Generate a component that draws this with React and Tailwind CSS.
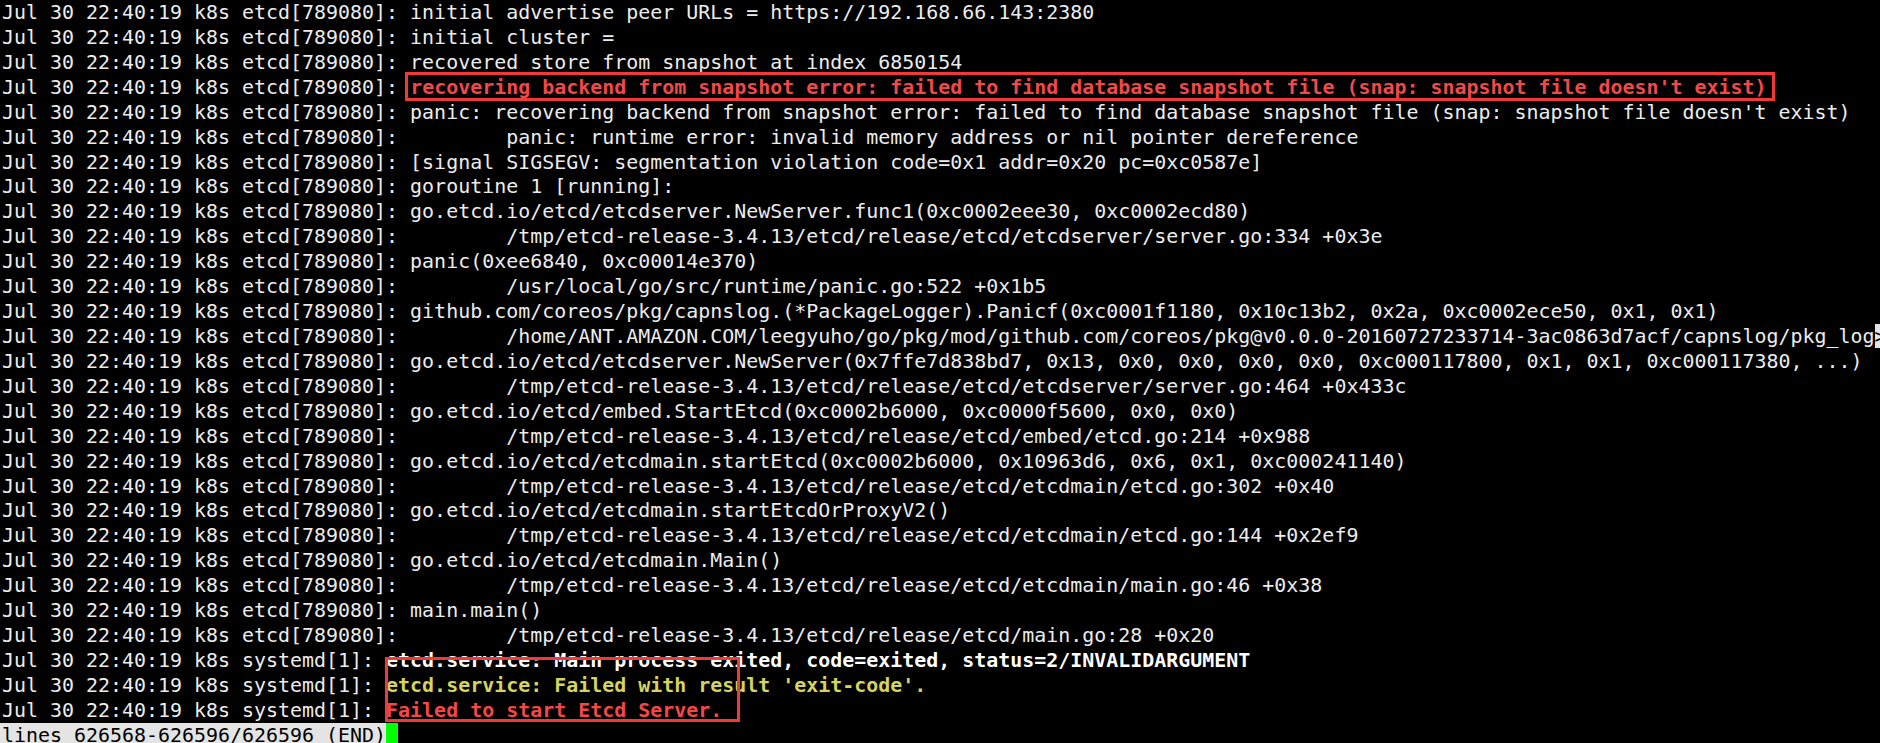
import React from 'react';

const P = 'Jul 30 22:40:19 k8s etcd[789080]: ';
const S = 'Jul 30 22:40:19 k8s systemd[1]: ';
const T = '        ';

const lines = [
  [P + 'initial advertise peer URLs = https://192.168.66.143:2380'],
  [P + 'initial cluster ='],
  [P + 'recovered store from snapshot at index 6850154'],
  [P, { t: "recovering backend from snapshot error: failed to find database snapshot file (snap: snapshot file doesn't exist)", c: 'font-bold text-[#f24848]' }],
  [P + "panic: recovering backend from snapshot error: failed to find database snapshot file (snap: snapshot file doesn't exist)"],
  [P + T + 'panic: runtime error: invalid memory address or nil pointer dereference'],
  [P + '[signal SIGSEGV: segmentation violation code=0x1 addr=0x20 pc=0xc0587e]'],
  [P + 'goroutine 1 [running]:'],
  [P + 'go.etcd.io/etcd/etcdserver.NewServer.func1(0xc0002eee30, 0xc0002ecd80)'],
  [P + T + '/tmp/etcd-release-3.4.13/etcd/release/etcd/etcdserver/server.go:334 +0x3e'],
  [P + 'panic(0xee6840, 0xc00014e370)'],
  [P + T + '/usr/local/go/src/runtime/panic.go:522 +0x1b5'],
  [P + 'github.com/coreos/pkg/capnslog.(*PackageLogger).Panicf(0xc0001f1180, 0x10c13b2, 0x2a, 0xc0002ece50, 0x1, 0x1)'],
  [P + T + '/home/ANT.AMAZON.COM/leegyuho/go/pkg/mod/github.com/coreos/pkg@v0.0.0-20160727233714-3ac0863d7acf/capnslog/pkg_log', { t: '>', c: 'bg-[#e4e4e4] text-black' }],
  [P + 'go.etcd.io/etcd/etcdserver.NewServer(0x7ffe7d838bd7, 0x13, 0x0, 0x0, 0x0, 0x0, 0xc000117800, 0x1, 0x1, 0xc000117380, ...)'],
  [P + T + '/tmp/etcd-release-3.4.13/etcd/release/etcd/etcdserver/server.go:464 +0x433c'],
  [P + 'go.etcd.io/etcd/embed.StartEtcd(0xc0002b6000, 0xc0000f5600, 0x0, 0x0)'],
  [P + T + '/tmp/etcd-release-3.4.13/etcd/release/etcd/embed/etcd.go:214 +0x988'],
  [P + 'go.etcd.io/etcd/etcdmain.startEtcd(0xc0002b6000, 0x10963d6, 0x6, 0x1, 0xc000241140)'],
  [P + T + '/tmp/etcd-release-3.4.13/etcd/release/etcd/etcdmain/etcd.go:302 +0x40'],
  [P + 'go.etcd.io/etcd/etcdmain.startEtcdOrProxyV2()'],
  [P + T + '/tmp/etcd-release-3.4.13/etcd/release/etcd/etcdmain/etcd.go:144 +0x2ef9'],
  [P + 'go.etcd.io/etcd/etcdmain.Main()'],
  [P + T + '/tmp/etcd-release-3.4.13/etcd/release/etcd/etcdmain/main.go:46 +0x38'],
  [P + 'main.main()'],
  [P + T + '/tmp/etcd-release-3.4.13/etcd/release/etcd/main.go:28 +0x20'],
  [S, { t: 'etcd.service: Main process exited, code=exited, status=2/INVALIDARGUMENT', c: 'font-bold text-white' }],
  [S, { t: "etcd.service: Failed with result 'exit-code'.", c: 'font-bold text-[#d4d45e]' }],
  [S, { t: 'Failed to start Etcd Server.', c: 'font-bold text-[#f24848]' }],
];

export default function App() {
  return (
    <div className="relative w-[1880px] h-[743px] overflow-hidden bg-black text-[#ececec] font-['DejaVu_Sans_Mono',monospace] text-[19.94px]">
      {lines.map((segs, i) => (
        <div key={i} className="h-[24.93px] leading-[24.93px] pl-[2px] whitespace-pre overflow-hidden">
          {segs.map((s, j) =>
            typeof s === 'string' ? <span key={j}>{s}</span> : <span key={j} className={s.c}>{s.t}</span>
          )}
        </div>
      ))}

      {/* status line */}
      <div className="flex h-[24.93px] leading-[24.93px] whitespace-pre">
        <span className="bg-[#e4e4e4] text-black pl-[2px]">lines 626568-626596/626596 (END)</span>
        <span className="w-[12px] bg-[#00ff00]" />
      </div>

      {/* annotation boxes */}
      <div className="absolute left-[405px] top-[72px] w-[1370px] h-[29px] border-[3px] border-[#f03a3a]" />
      <div className="absolute left-[385px] top-[657px] w-[355px] h-[65px] border-[3px] border-[#f03a3a]" />
    </div>
  );
}
